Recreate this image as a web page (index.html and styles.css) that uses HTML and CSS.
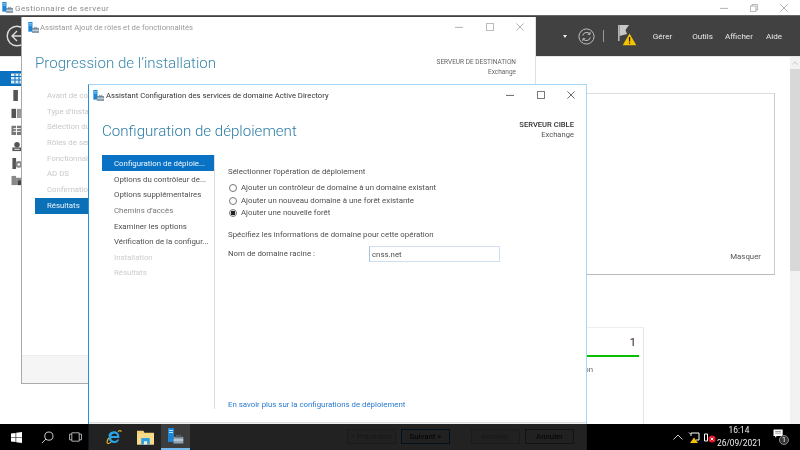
FILE: index.html
```html
<!DOCTYPE html>
<html lang="fr">
<head>
<meta charset="utf-8">
<title>Gestionnaire de serveur</title>
<link rel="stylesheet" href="styles.css">
</head>
<body>
<svg class="defs" width="0" height="0">
  <symbol id="sm" viewBox="0 0 16 16">
    <rect x="0.5" y="0" width="6" height="14" fill="#1b86d8"/>
    <rect x="1.5" y="2" width="4" height="1" fill="#bfe0f8"/>
    <rect x="1.5" y="4" width="4" height="1" fill="#bfe0f8"/>
    <rect x="6" y="9" width="10" height="6.5" fill="#8fa3b3" stroke="#5c6f7e" stroke-width=".6"/>
    <rect x="9" y="7.5" width="4" height="1.6" fill="none" stroke="#5c6f7e" stroke-width=".7"/>
    <rect x="6" y="11.5" width="10" height="1" fill="#dfe7ec"/>
  </symbol>
</svg>

<div class="manager">
  <div class="m-title">
    <svg class="m-logo"><use href="#sm"/></svg>
    <span class="m-name">Gestionnaire de serveur</span>
    <div class="m-ctrl">
      <svg class="c-ic" viewBox="0 0 10 10"><path d="M0 5.5h10" /></svg>
      <svg class="c-ic" viewBox="0 0 10 10"><path d="M.5 2.5h7v7h-7zM2.5 2.5V.5h7v7h-2"/></svg>
      <svg class="c-ic" viewBox="0 0 10 10"><path d="M.5.5l9 9M9.5.5l-9 9"/></svg>
    </div>
  </div>
  <div class="m-bar">
    <svg class="back" viewBox="0 0 22 22"><circle cx="11" cy="11" r="9.8"/><path d="M16 11H7M11 6l-5 5 5 5"/></svg>
    <div class="m-tools">
      <span class="caret"></span>
      <svg class="refresh" viewBox="0 0 18 18"><circle cx="9" cy="9" r="8"/><path d="M5 8a4.2 4.2 0 0 1 7.5-1.6M13 10a4.2 4.2 0 0 1-7.5 1.6M12.8 4.3v2.4h-2.4M5.2 13.7v-2.4h2.4"/></svg>
      <span class="sep"></span>
      <span class="flag-wrap">
        <svg class="flag" viewBox="0 0 20 22"><path d="M1 0h1.6v16H1z" fill="#b4b4b4"/><path d="M2.6 0L12 0 8.5 5 10 9 2.6 11z" fill="#c8c8c8"/><path d="M12.5 8.5l6.8 11.8H5.7z" fill="#f7c300"/><path d="M11.9 12h1.3v4.6h-1.3zM11.9 17.4h1.3v1.3h-1.3z" fill="#222"/></svg>
      </span>
      <nav class="menu">
        <span class="m-gerer">Gérer</span>
        <span class="m-outils">Outils</span>
        <span class="m-aff">Afficher</span>
        <span>Aide</span>
      </nav>
    </div>
  </div>
  <div class="m-body">
    <aside class="rail">
      <div class="rail-item on"><svg viewBox="0 0 12 10"><path d="M0 0h12v10H0z" fill="#d8ecfa"/><path d="M0 3h12M0 6.5h12M4 0v10M8 0v10" stroke="#0a70c0" fill="none"/></svg></div>
      <div class="rail-item"><svg viewBox="0 0 12 12"><rect x="2" width="5" height="12" fill="#555"/></svg></div>
      <div class="rail-item"><svg viewBox="0 0 12 12"><rect x="0" y="2" width="5" height="10" fill="#555"/><rect x="6" y="2" width="6" height="10" fill="#999"/></svg></div>
      <div class="rail-item"><svg viewBox="0 0 12 12"><path d="M0 2h5v10H0zM6 2h6v10H6z" fill="#777"/><path d="M2 5h8M2 8h8" stroke="#fff"/></svg></div>
      <div class="rail-item"><svg viewBox="0 0 12 12"><circle cx="6" cy="4" r="3" fill="#555"/><rect x="1" y="7" width="11" height="4" fill="#555"/><path d="M3 9h6" stroke="#fff"/></svg></div>
      <div class="rail-item"><svg viewBox="0 0 12 12"><rect x="1" y="0" width="4" height="12" fill="#555"/><circle cx="8" cy="7" r="3.6" fill="#888"/><circle cx="8" cy="7" r="1.4" fill="#fff"/></svg></div>
      <div class="rail-item"><svg viewBox="0 0 12 12"><rect x="0" y="1" width="5" height="10" fill="#888"/><rect x="5" y="3" width="7" height="8" fill="#888"/><rect x="7" y="6" width="5" height="5" fill="#444"/></svg></div>
    </aside>
    <main class="m-main">
      <section class="panel"><span class="masquer">Masquer</span></section>
      <div class="cards">
        <section class="card">
          <div class="card-num">1</div>
          <div class="card-bar"></div>
          <div class="card-label">Gestion</div>
        </section>
      </div>
    </main>
    <div class="scroll">
      <svg class="arr-u" viewBox="0 0 8 5"><path d="M.5 4.500L4 1l3.500 3.500"/></svg>
      <div class="thumb"></div>
      <div class="track"></div>
      <svg class="arr-d" viewBox="0 0 8 5"><path d="M.5.5L4 4 7.500.5"/></svg>
    </div>
  </div>
</div>

<section class="win back-win">
  <header class="w-title">
    <svg class="w-logo"><use href="#sm"/></svg>
    <span class="w-name">Assistant Ajout de rôles et de fonctionnalités</span>
    <div class="w-ctrl">
      <svg class="c-ic" viewBox="0 0 10 10"><path d="M0 5.5h10"/></svg>
      <svg class="c-ic" viewBox="0 0 10 10"><path d="M.5.5h9v9h-9z"/></svg>
      <svg class="c-ic" viewBox="0 0 10 10"><path d="M.5.5l9 9M9.5.5l-9 9"/></svg>
    </div>
  </header>
  <div class="w-head">
    <h1>Progression de l’installation</h1>
    <div class="dest"><div>SERVEUR DE DESTINATION</div><div>Exchange</div></div>
  </div>
  <div class="back-body">
    <ul class="b-steps">
      <li>Avant de commencer</li>
      <li>Type d’installation</li>
      <li>Sélection du serveur</li>
      <li>Rôles de serveurs</li>
      <li>Fonctionnalités</li>
      <li>AD DS</li>
      <li>Confirmation</li>
      <li class="on">Résultats</li>
    </ul>
  </div>
  <footer class="back-foot"></footer>
</section>

<section class="win front-win">
  <header class="w-title f-title">
    <svg class="w-logo"><use href="#sm"/></svg>
    <span class="w-name">Assistant Configuration des services de domaine Active Directory</span>
    <div class="w-ctrl">
      <svg class="c-ic" viewBox="0 0 10 10"><path d="M0 5.5h10"/></svg>
      <svg class="c-ic" viewBox="0 0 10 10"><path d="M.5.5h9v9h-9z"/></svg>
      <svg class="c-ic" viewBox="0 0 10 10"><path d="M.5.5l9 9M9.5.5l-9 9"/></svg>
    </div>
  </header>
  <div class="f-head">
    <h1>Configuration de déploiement</h1>
    <div class="target"><div class="t-strong">SERVEUR CIBLE</div><div>Exchange</div></div>
  </div>
  <div class="f-body">
    <ul class="steps">
      <li class="on">Configuration de déploie...</li>
      <li>Options du contrôleur de...</li>
      <li>Options supplémentaires</li>
      <li class="mid">Chemins d’accès</li>
      <li>Examiner les options</li>
      <li>Vérification de la configur...</li>
      <li class="off">Installation</li>
      <li class="off">Résultats</li>
    </ul>
    <div class="content">
      <p class="lead">Sélectionner l’opération de déploiement</p>
      <div class="radios">
        <div class="radio"><span class="dot"></span>Ajouter un contrôleur de domaine à un domaine existant</div>
        <div class="radio"><span class="dot"></span>Ajouter un nouveau domaine à une forêt existante</div>
        <div class="radio sel"><span class="dot"></span>Ajouter une nouvelle forêt</div>
      </div>
      <p class="spec">Spécifiez les informations de domaine pour cette opération</p>
      <div class="field"><span class="f-label">Nom de domaine racine :</span><span class="input">cnss.net</span></div>
      <a class="more">En savoir plus sur la configurations de déploiement</a>
    </div>
  </div>
  <footer class="f-foot">
    <span class="btn dis">&lt; Précédent</span>
    <span class="btn def">Suivant &gt;</span>
    <span class="btn dis inst">Installer</span>
    <span class="btn">Annuler</span>
  </footer>
</section>

<div class="taskbar">
  <div class="tb-left">
    <svg class="win-logo" viewBox="0 0 11 11"><path d="M0 1.6l4.6-.7v4.3H0zM5.2.8L11 0v5.2H5.2zM0 5.8h4.6v4.3L0 9.4zM5.2 5.8H11V11l-5.8-.8z" fill="#fff"/></svg>
    <svg class="search" viewBox="0 0 14 14"><circle cx="8.5" cy="5.5" r="4.4"/><path d="M5.4 8.6L1 13"/></svg>
    <svg class="tview" viewBox="0 0 14 12"><path d="M3 1.5h8v9H3zM3 3H.5v6H3M11 3h2.500v6H11"/></svg>
  </div>
  <div class="tb-mid">
    <div class="tb-app"><svg viewBox="0 0 18 18"><path d="M3 7.6C4 4.2 6.8 2.6 9.6 2.6c3.6 0 6 2.6 6 6.6v1H6.4c.2 2 1.6 3.2 3.6 3.2 1.4 0 2.6-.6 3.300-1.700h2.100c-1 2.700-3.200 4-5.600 4-3.400 0-6-2.200-6-5.600 0-.9.100-1.700.2-2.500zM6.500 8h6.700c-.2-1.800-1.500-3-3.300-3S6.800 6.200 6.500 8z" fill="#2aa4e8"/><path d="M14 3c2-1.600 3.600-1.800 3.400.2M3.600 10C1.600 13.400 1 16.300 3 16.300c1 0 2.300-.7 3.300-1.500" fill="none" stroke="#f2c42a" stroke-width="1.200"/></svg></div>
    <div class="tb-app"><svg viewBox="0 0 16 14"><path d="M0 1h6l1 2h9v11H0z" fill="#f3d27a"/><path d="M0 4h16v10H0z" fill="#f8dc8c"/><path d="M4 8h8v6H4z" fill="#2b9fe6"/><path d="M6.500 11h3v3h-3z" fill="#f8f0d0"/></svg></div>
    <div class="tb-app active"><svg viewBox="0 0 16 16"><use href="#sm"/></svg></div>
  </div>
  <div class="tb-right">
    <svg class="tray-up" viewBox="0 0 10 6"><path d="M.5 5.500L5 1l4.500 4.500"/></svg>
    <svg class="tray-net" viewBox="0 0 12 12"><path d="M1 1.500l1.500 1.500M3 2h8v7H8" fill="none" stroke="#fff"/><path d="M3 2v3" stroke="#fff"/><path d="M6 6.500l4 5.500H2z" fill="#f7c300"/></svg>
    <svg class="tray-snd" viewBox="0 0 12 11"><path d="M.5 2h3v7h-3z" fill="none" stroke="#fff"/><circle cx="8" cy="7" r="3.600" fill="#e81123"/><path d="M6.600 5.600l2.800 2.800M9.400 5.600L6.600 8.400" stroke="#fff"/></svg>
    <div class="clock"><div>16:14</div><div>26/09/2021</div></div>
    <div class="notif">
      <svg viewBox="0 0 13 12"><path d="M.5.500h11v8h-7l-2 2v-2h-2z" fill="#fff"/><path d="M2.500 3h7M2.500 5h7" stroke="#888"/></svg>
      <span class="badge">1</span>
    </div>
  </div>
</div>
</body>
</html>
```

FILE: styles.css
```css
* { box-sizing: border-box; }
html, body { margin: 0; padding: 0; width: 800px; height: 450px; overflow: hidden; background: #fff; }
body { font-family: Roboto, "Liberation Sans", sans-serif; font-size: 7.85px; color: #4f4f4f; position: relative; filter: blur(.3px); }
ul { list-style: none; margin: 0; padding: 0; }
h1 { margin: 0; font-weight: 300; }
p { margin: 0; }
.defs { position: absolute; }

.c-ic { width: 8px; height: 8px; fill: none; stroke: #a0a0a0; stroke-width: 1; }

/* Server manager */
.manager { height: 450px; display: flex; flex-direction: column; }
.m-title { height: 15px; display: flex; align-items: center; padding-left: 2px; flex: none; }
.m-logo { width: 11px; height: 11px; margin-right: 2px; }
.m-name { color: #8c8c8c; font-size: 8.1px; letter-spacing: .4px; }
.m-ctrl { margin-left: auto; display: flex; gap: 22px; padding-right: 12px; }
.m-bar { height: 41px; flex: none; background: #414141; border-top: 1px solid #666; display: flex; align-items: center; color: #eee; padding-left: 6px; }
.back { width: 22px; height: 22px; fill: none; stroke: #ddd; stroke-width: 1.4; }
.m-tools { margin-left: auto; display: flex; align-items: center; padding-right: 18px; }
.caret { border: 2.5px solid transparent; border-top: 3px solid #eee; border-bottom: 0; margin-right: 11px; }
.refresh { width: 17px; height: 17px; fill: none; stroke: #c8c8c8; stroke-width: 1; }
.sep { width: 1px; height: 12px; background: #999; margin: 0 13px 0 8px; }
.flag-wrap { width: 20px; height: 22px; margin-right: 16px; }
.flag { width: 20px; height: 22px; display: block; }
.menu { display: flex; font-size: 8.1px; color: #e8e8e8; }
.m-gerer { margin-right: 20px; }
.m-outils { margin-right: 12px; }
.m-aff { margin-right: 13px; }

.m-body { flex: 1; display: flex; min-height: 0; border-top: 1px solid #e6e6e6; }
.rail { width: 30px; flex: none; padding-top: 14px; display: flex; flex-direction: column; }
.rail-item { height: 15px; margin-bottom: 2px; padding: 2px 0 0 11px; }
.rail-item svg { width: 12px; height: 11px; display: block; }
.rail-item.on { background: #0a70c0; }
.m-main { flex: 1; padding: 36px 15px 0 0; display: flex; flex-direction: column; }
.panel { height: 182px; margin-left: 100px; border: 1px solid #ddd; border-bottom-color: #bbb; border-right-color: #ccc; display: flex; align-items: flex-end; justify-content: flex-end; padding: 0 13px 13px 0; }
.masquer { color: #555; }
.cards { display: flex; justify-content: flex-end; padding-right: 131px; margin-top: 52px; flex: 1; }
.card { width: 215px; border: 1px solid #eee; border-right: 1px solid #e4e4e4; padding-right: 4px; }
.card-num { text-align: right; font-size: 11px; line-height: 14px; padding: 8px 3px 0 0; color: #32202c; }
.card-bar { height: 2px; background: #0ac000; margin-top: 5px; }
.card-label { text-align: right; padding: 8px 46px 0 0; color: #666; }
.scroll { width: 10px; flex: none; background: #f2f2f2; display: flex; flex-direction: column; align-items: center; }
.arr-u { width: 6px; height: 4px; margin: 4px 0 4px; flex: none; fill: none; stroke: #bbb; }
.thumb { width: 100%; height: 202px; background: #d8d8d8; }
.track { flex: 1; }
.arr-d { width: 7px; height: 5px; flex: none; fill: none; stroke: #bbb; margin-bottom: 3px; }

/* Windows */
.win { position: absolute; background: #fff; display: flex; flex-direction: column; }
.back-win { left: 21px; top: 17px; width: 515px; height: 367px; border-left: 1px solid #aaa; border-bottom: 1px solid #aaa; border-right: 1px solid #e0e0e0; }
.w-title { height: 20px; flex: none; display: flex; align-items: center; padding-left: 6px; }
.w-logo { width: 11px; height: 11px; margin-right: 1px; }
.w-name { color: #9a9a9a; font-size: 7.7px; }
.w-ctrl { margin-left: auto; display: flex; gap: 22.500px; padding-right: 11px; }
.w-head { height: 51px; flex: none; display: flex; justify-content: space-between; padding: 8px 19px 0 13px; }
.w-head h1 { font-size: 15.1px; line-height: 36px; color: #3a87ad; }
.dest { text-align: right; font-size: 6.5px; line-height: 9.500px; color: #666; padding-top: 13px; }
.back-body { flex: 1; padding-left: 13px; }
.b-steps li { height: 15.700px; padding-left: 12px; line-height: 16px; color: #c8c8c8; white-space: nowrap; overflow: hidden; }
.b-steps li.on { background: #0a70b8; color: #e8f2fa; }
.back-foot { height: 28px; flex: none; background: #f5f5f5; border-top: 1px solid #ececec; }

.front-win { left: 88px; top: 84px; width: 499px; height: 366px; border: 1px solid #a4d6f6; border-left-color: #2490e0; border-bottom: 0; }
.f-title { padding-left: 4px; }
.f-title .w-logo { margin-right: 2px; }
.f-title .w-name { color: #333; }
.f-title .c-ic { stroke: #444; }
.f-title .w-ctrl { padding-right: 11px; }
.f-head { height: 50px; flex: none; display: flex; justify-content: space-between; padding: 1px 12px 0 13px; }
.f-head h1 { font-size: 15.1px; line-height: 50px; color: #2d7da6; }
.target { text-align: right; font-size: 7.6px; line-height: 10px; padding-top: 14px; color: #555; }
.t-strong { font-weight: 500; color: #333; }
.f-body { flex: 1; min-height: 0; display: flex; padding: 0 0 13px 13px; }
.steps { width: 113px; flex: none; border-right: 1px solid #ddd; }
.steps li { height: 15.640px; padding-left: 12px; line-height: 17px; white-space: nowrap; }
.steps li.on { background: #0a72c4; color: #eef6fc; }
.steps li.mid { color: #777; }
.steps li.off { color: #ccc; }
.content { flex: 1; padding: 12px 0 0 13px; display: flex; flex-direction: column; }
.lead, .spec { line-height: 10px; }
.radios { margin-top: 5px; }
.radio { height: 12.500px; display: flex; align-items: center; line-height: 12px; white-space: nowrap; }
.dot { width: 8px; height: 8px; border: 1px solid #777; border-radius: 50%; margin: 0 4px 0 1px; flex: none; background: #fff; }
.radio.sel .dot { background: radial-gradient(circle, #222 0 2.200px, #fff 2.600px); }
.spec { margin-top: 10px; }
.field { margin-top: 6px; display: flex; align-items: center; height: 16px; }
.f-label { width: 141px; line-height: 18px; }
.input { width: 131px; height: 16px; border: 1px solid #d0e0f0; border-left-color: #aac4dc; padding-left: 2px; line-height: 15px; }
.more { margin-top: auto; margin-bottom: -1px; color: #2a7ad0; line-height: 10px; }
.f-foot { height: 28px; flex: none; background: #f0f0f0; border-top: 1px solid #ddd; display: flex; justify-content: flex-end; gap: 5px; padding: 6px 12px 0 0; }
.btn { width: 49px; height: 15px; border: 1px solid #888; text-align: center; line-height: 13px; background: #e6e6e6; color: #000; }
.btn.dis { color: #999; border-color: #bbb; }
.btn.def { border-color: #0070d0; }
.btn.inst { margin-left: 16px; }

/* Taskbar */
.taskbar { position: absolute; left: 0; right: 0; bottom: 0; height: 26px; display: flex; color: #fff; }
.tb-left { width: 88px; flex: none; background: #000; display: flex; align-items: center; padding-left: 11px; }
.win-logo { width: 11px; height: 11px; margin-right: 19px; }
.search { width: 13px; height: 13px; fill: none; stroke: #ddd; margin-right: 15px; }
.tview { width: 13px; height: 12px; fill: none; stroke: #bbb; }
.tb-mid { width: 499px; flex: none; background: rgba(0,0,0,.86); display: flex; padding-left: 9px; }
.tb-app { width: 32px; height: 26px; display: flex; align-items: center; justify-content: center; }
.tb-app svg { width: 17px; height: 16px; }
.tb-app.active { background: #3c3c3c; border-bottom: 2px solid #76b9ed; width: 29px; }
.tb-right { flex: 1; background: #000; display: flex; align-items: center; padding-left: 86px; }
.tray-up { width: 10px; height: 6px; fill: none; stroke: #ccc; margin-right: 5px; }
.tray-net { width: 12px; height: 12px; margin-right: 4px; }
.tray-snd { width: 12px; height: 11px; margin-right: 1px; }
.clock { width: 44px; text-align: center; font-size: 8.400px; line-height: 13px; color: #eee; white-space: nowrap; }
.notif { position: relative; width: 16px; height: 16px; margin-left: 12px; }
.notif svg { width: 11px; height: 10px; display: block; }
.badge { position: absolute; right: 0; bottom: 0; width: 10px; height: 10px; border-radius: 50%; background: #333; border: 1px solid #888; font-size: 7px; line-height: 8px; text-align: center; }
```
